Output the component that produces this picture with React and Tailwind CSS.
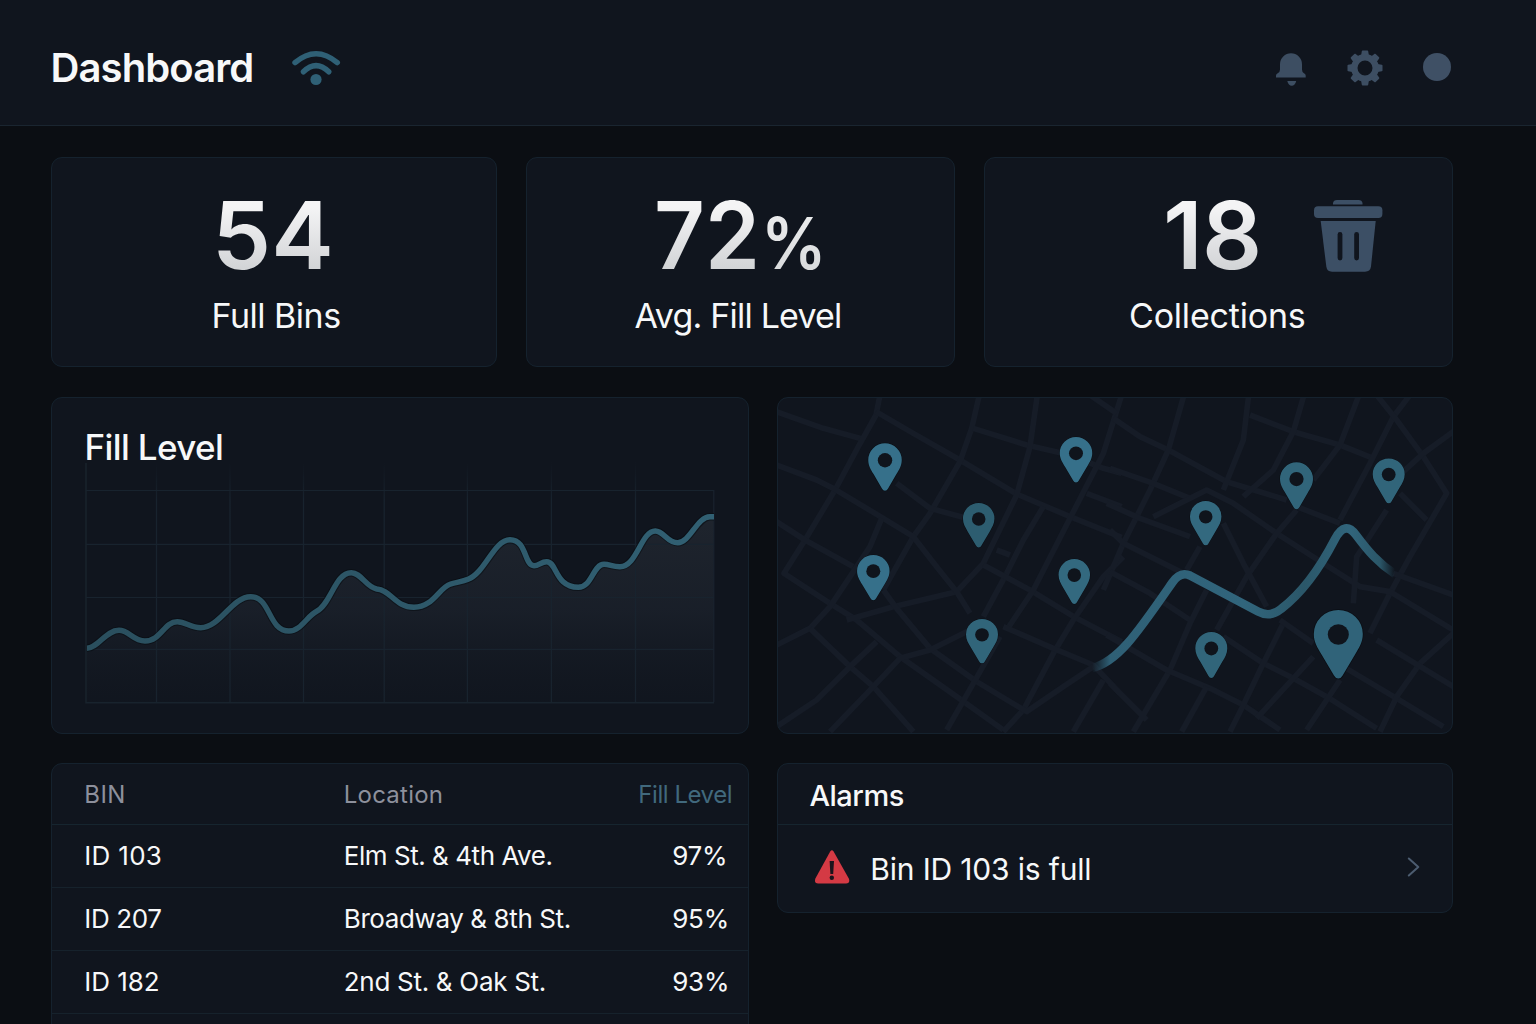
import React from "react";

const CARD =
  "rounded-[11px] border border-[#15222e] bg-[#10151e] overflow-hidden";
const NUMBER =
  "bg-linear-to-b from-[#f4f4f5] from-20% to-[#d3d5d7] to-85% bg-clip-text text-transparent text-[94px] leading-[94px] font-semibold whitespace-nowrap";
const LABEL =
  "mt-[14px] text-[34px] leading-[40px] text-[#f7f8f9] whitespace-nowrap";

function WifiIcon() {
  return (
    <svg width="52" height="40" viewBox="290 48 52 40" fill="none">
      <g stroke="#2f6076" strokeLinecap="round">
        <path d="M295 62.6Q316 44.8 337.3 62.6" strokeWidth="5.4" />
        <path d="M303.4 71.8Q316 59.6 328.8 71.8" strokeWidth="5.4" />
      </g>
      <circle cx="316" cy="79.5" r="5.6" fill="#2f6076" />
    </svg>
  );
}

function BellIcon() {
  return (
    <svg width="32" height="36" viewBox="1275 50 32 36" fill="#3d4e62">
      <path d="M1280 65V64.3A11 11 0 0 1 1302 64.3V69.5Q1302 72.3 1304 73.2Q1305.7 74 1305.7 75.5V77.5H1276V75.5Q1276 74 1277.7 73.2Q1280 72.3 1280 69.5Z" />
      <path d="M1287.3 81H1296.2Q1295 85.8 1291.7 85.8Q1288.5 85.8 1287.3 81Z" />
    </svg>
  );
}

function GearIcon() {
  const angles = [0, 45, 90, 135, 180, 225, 270, 315];
  return (
    <svg width="36" height="36" viewBox="-18 -18 36 36">
      <circle r="10.7" fill="none" stroke="#3d4e62" strokeWidth="6.4" />
      {angles.map((a) => (
        <path
          key={a}
          d="M-3.9 -12.5L-3.2 -16.8Q-3.1 -17.5 -2.4 -17.5H2.4Q3.1 -17.5 3.2 -16.8L3.9 -12.5Z"
          fill="#3d4e62"
          transform={`rotate(${a})`}
        />
      ))}
    </svg>
  );
}

function TrashIcon() {
  return (
    <svg width="70" height="74" viewBox="1313 199 70 74" className="mt-[11px] ml-[50px]">
      <g fill="#3c4f65">
        <path d="M1333 204.500V203Q1333.500 200 1337 200H1358.500Q1362 200 1362.500 203V204.500Z" />
        <rect x="1314" y="206.2" width="68.4" height="11.8" rx="4" />
        <path d="M1320.7 221H1375.7L1371 266.5Q1370.3 271.7 1365 271.7H1332Q1327 271.7 1326.3 266.5Z" />
      </g>
      <g fill="#10151e">
        <rect x="1337.6" y="232" width="4.8" height="28.5" rx="2.4" />
        <rect x="1354.2" y="232" width="4.8" height="28.5" rx="2.4" />
      </g>
    </svg>
  );
}

function WarningIcon() {
  return (
    <svg width="36" height="36" viewBox="814 849 36 36">
      <path
        d="M830.2 851.5Q831.9 849.2 833.6 851.5L848.8 878.5Q850.6 883.2 846 883.5H818.2Q813.8 883.2 815.4 878.5Z"
        fill="#d43a44"
      />
      <path d="M829.6 861H834L833.2 874H830.4Z" fill="#1a141c" />
      <circle cx="831.8" cy="877.8" r="2.2" fill="#1a141c" />
    </svg>
  );
}

const LINE =
  "M87 648.3C98 648 106 630.3 119 630.3C129 630.3 133 641 145 641C161 641 164 621.7 177.3 621.7C186 621.7 190 627.7 200.7 627.7C220 627.7 232 596.7 250.7 596.7C271 596.7 268 631 289 631C301 631 307 616 316.7 611.3C331 604 335 572.7 351.3 572.7C361 572.7 366 587 376.7 589C391 590 395 607.3 414 607.3C433 607.3 439 588 450 584.3C456 582 462 582 468 579.3C485 573 494 539.7 510 539.7C527 539.7 524 565.7 534 565.7C539 565.7 541 561.7 546.7 561.7C557 561.7 555 587.3 578.3 587.3C592 587.3 593 564.3 604 564.3C610 564.3 612 566.7 620 566.7C637 566.7 641 531 655.3 531C664 531 667 542.7 677.7 542.7C690 542.7 697 516.7 710 516.7H714";

function FillChart() {
  const xs = [156.5, 230, 303.5, 384.2, 467.4, 551.4, 635.5];
  const ys = [490.5, 544.4, 597.5, 649.4];
  return (
    <svg width="696" height="271" viewBox="52 462 696 271" className="block">
      <defs>
        <linearGradient id="area" gradientUnits="userSpaceOnUse" x1="0" y1="520" x2="0" y2="703">
          <stop offset="0" stopColor="#20262f" stopOpacity="0.9" />
          <stop offset="0.5" stopColor="#1b212b" stopOpacity="0.8" />
          <stop offset="1" stopColor="#141a23" stopOpacity="0.15" />
        </linearGradient>
        <linearGradient id="rise" gradientUnits="userSpaceOnUse" x1="0" y1="462" x2="0" y2="500">
          <stop offset="0" stopColor="#16202b" stopOpacity="0" />
          <stop offset="1" stopColor="#18232e" />
        </linearGradient>
        <linearGradient id="stroke" gradientUnits="userSpaceOnUse" x1="87" y1="0" x2="714" y2="0">
          <stop offset="0" stopColor="#2a4f5e" />
          <stop offset="1" stopColor="#316073" />
        </linearGradient>
      </defs>
      <path d={`${LINE}V703H87Z`} fill="url(#area)" />
      {xs.map((x) => (
        <rect key={x} x={x - 0.6} y="462" width="1.2" height="241" fill="url(#rise)" />
      ))}
      {ys.map((y) => (
        <path key={y} d={`M86 ${y}H714`} stroke="#18232e" strokeWidth="1.2" />
      ))}
      <path d="M86 463V702.8H714" fill="none" stroke="#18232d" strokeWidth="1.5" />
      <path d="M713.8 490V702" stroke="#1a222d" strokeWidth="1.2" />
      <path d={LINE} fill="none" stroke="#090d13" strokeWidth="7.4" opacity="0.6" />
      <path d={LINE} fill="none" stroke="url(#stroke)" strokeWidth="5.4" />
    </svg>
  );
}

const ROADS_WEST = [
  "20,65 160,115 280,148",
  "330,15 318,75 265,170 195,300 105,450 42,550 180,640 260,690 390,800 560,920 700,1020",
  "318,65 430,130 570,210 740,312 900,380 1055,442",
  "628,15 605,115 570,215 480,370 430,440 340,600",
  "610,115 770,165 900,195 1000,235 1055,250",
  "802,15 780,170 740,315 640,520 560,605 370,650 230,690",
  "20,225 140,270 195,298 340,385 430,440 500,530 560,605 600,670",
  "20,395 105,450 250,530",
  "335,385 300,470 180,650 120,715 20,765",
  "380,280 480,355 590,385",
  "820,350 760,450 710,550 640,680",
  "680,480 720,495",
  "640,525 780,600 920,685 1055,755",
  "1055,15 1000,190 900,385 790,600 710,720",
  "960,15 1040,70",
  "950,310 1055,350",
  "1060,500 1000,560 910,690 850,790 760,960 700,1025",
  "700,710 850,775 970,825 1050,910",
  "970,830 880,890 770,965 620,875 480,775 380,655 340,600",
  "120,715 240,830 310,890 430,1025",
  "320,755 240,830 140,930 20,1010",
  "600,720 480,780 390,805 310,890 180,1025",
  "690,740 610,880 530,1020",
  "1000,870 910,1025",
];

const ROADS_EAST = [
  "10,85 90,140 175,180 350,275 530,330",
  "222,15 175,180 120,300 40,460 -20,600",
  "416,15 400,150 340,300",
  "420,75 550,125 690,165 790,205",
  "582,15 550,125 490,240 400,320",
  "747,15 690,165 610,270",
  "900,15 850,80 780,220 690,390",
  "800,15 860,90 940,200 1010,310 900,500 840,610 780,730",
  "1030,125 940,190 880,245",
  "0,235 130,280 240,325",
  "130,380 290,300 370,340 500,430 640,520 750,590 840,605 1030,720",
  "-10,340 90,385 240,440",
  "560,350 690,400",
  "560,360 500,430 410,560 320,720",
  "340,400 400,520 470,650",
  "270,470 230,540",
  "0,420 40,460 220,550",
  "850,550 1030,615",
  "870,310 950,390",
  "830,360 740,500 730,640",
  "0,545 120,610 240,690",
  "290,600 240,700 180,840 70,1025",
  "-10,735 170,840 300,895 400,945 510,1020",
  "340,740 460,820 550,865 650,920 800,1015",
  "520,700 460,820 400,945 360,1025",
  "510,690 610,760",
  "610,800 550,865 440,985",
  "690,870 590,1020",
  "700,830 860,925 1000,1010",
  "1030,730 930,820 860,920 810,1025",
  "800,750 1030,890",
  "0,880 110,990",
  "290,890 215,1025",
];

// [centre x, top, width, height, fill]
const PINS = [
  [885, 443.3, 33.5, 47.5, "#36708a"],
  [1076, 437, 32.5, 45.5, "#36708a"],
  [978.7, 503, 31.5, 44.5, "#2d5d70"],
  [873.3, 555, 32.5, 45.3, "#36708a"],
  [1074.3, 559, 31.5, 45, "#33697f"],
  [982, 619, 32, 44.3, "#31657a"],
  [1205.7, 501, 31.5, 44.3, "#33697f"],
  [1296.5, 462.3, 33, 47, "#31657a"],
  [1388.7, 458.5, 32, 44.8, "#31657a"],
  [1211.3, 632, 32, 46, "#31657a"],
  [1338.3, 610, 49, 68.5, "#306379"],
];

const ROUTE =
  "M1092 668C1118 662 1138 632 1172 583Q1180 571 1190 575.5L1258 611.5Q1270 618 1281 609C1302 593 1320 568 1335 539Q1345 520 1356 535C1368 551 1378 563 1395 574";

function RouteMap() {
  return (
    <svg width="674" height="335" viewBox="778 398 674 335" className="block">
      <defs>
        <linearGradient id="route" gradientUnits="userSpaceOnUse" x1="1092" y1="0" x2="1395" y2="0">
          <stop offset="0" stopColor="#2f6076" stopOpacity="0" />
          <stop offset="0.06" stopColor="#2f6076" />
          <stop offset="0.5" stopColor="#31657c" />
          <stop offset="0.7" stopColor="#2b5769" />
          <stop offset="0.85" stopColor="#31657c" />
          <stop offset="0.95" stopColor="#2b5769" />
          <stop offset="1" stopColor="#2b5769" stopOpacity="0" />
        </linearGradient>
      </defs>
      <g fill="none" stroke="#161c27" strokeWidth="17" strokeLinejoin="round">
        <g transform="translate(770 390) scale(0.33333)">
          {ROADS_WEST.map((p) => (
            <polyline key={p} points={p} />
          ))}
        </g>
        <g transform="translate(1110 390) scale(0.33333)">
          {ROADS_EAST.map((p) => (
            <polyline key={p} points={p} />
          ))}
        </g>
      </g>
      <path d={ROUTE} fill="none" stroke="url(#route)" strokeWidth="8.5" />
      {PINS.map(([x, y, w, h, fill]) => (
        <g key={x} transform={`translate(${x - w / 2} ${y}) scale(${w / 33} ${h / 47})`}>
          <path
            d="M16.5 47Q14.6 47 13.6 45L5.2 30.5C2.5 26 0 22 0 16.5A16.5 16.5 0 0 1 33 16.5C33 22 30.5 26 27.8 30.5L19.4 45Q18.4 47 16.5 47Z"
            fill={fill}
            stroke="#0a0e14"
            strokeWidth="1"
            paintOrder="stroke"
          />
          <circle cx="16.5" cy="16.8" r="7.1" fill="#0f141c" />
        </g>
      ))}
    </svg>
  );
}

const ROWS = [
  { id: "ID 103", idCls: "tracking-[0.3px]", place: "Elm St. & 4th Ave.", placeCls: "tracking-[-0.46px]", fill: "97%" },
  { id: "ID 207", idCls: "tracking-[-0.35px]", place: "Broadway & 8th St.", placeCls: "tracking-[-0.4px]", fill: "95%" },
  { id: "ID 182", idCls: "tracking-[-0.05px]", place: "2nd St. & Oak St.", placeCls: "tracking-[-0.3px]", fill: "93%" },
];

const GRID = "grid grid-cols-[259.5px_294.5px_1fr] items-center pl-[32.3px] whitespace-nowrap";

export default function App() {
  return (
    <div className="h-[1024px] w-[1536px] overflow-hidden bg-[#0b0e13] font-[Inter,sans-serif] text-[#f7f8f9]">
      <header className="flex h-[126px] items-start border-b border-[#1a2530] bg-[#10151e]">
        <h1 className="mt-[44px] ml-[50.5px] w-[208px] text-[40px] leading-[48px] font-semibold tracking-[-0.9px]">
          Dashboard
        </h1>
        <div className="mt-[48px] ml-[31.5px]">
          <WifiIcon />
        </div>
        <div className="mt-[50px] mr-[85px] ml-auto flex items-start">
          <BellIcon />
          <div className="ml-[40px]">
            <GearIcon />
          </div>
          <div className="mt-[3px] ml-[40px] size-[28px] rounded-full bg-[#3f5065]" />
        </div>
      </header>

      <main className="flex w-[1453px] flex-col pt-[31px] pl-[51px]">
        <section className="grid h-[210px] grid-cols-[446px_429px_469px] gap-[29px]">
          <div className={`${CARD} flex flex-col items-start pt-[30px]`}>
            <div className={`${NUMBER} ml-[160px] tracking-[0.1px]`}>54</div>
            <div className={`${LABEL} ml-[159.5px] tracking-[-0.5px]`}>Full Bins</div>
          </div>
          <div className={`${CARD} flex flex-col items-start pt-[30px]`}>
            <div className="ml-[127px] flex h-[94px] items-baseline">
              <span className={`${NUMBER} origin-left scale-x-[0.94]`}>72</span>
              <span className="ml-[-5.5px] origin-left scale-x-[0.92] bg-linear-to-b from-[#f0f1f2] to-[#d3d5d7] bg-clip-text text-[71px] leading-[90px] font-semibold text-transparent">
                %
              </span>
            </div>
            <div className={`${LABEL} ml-[107.5px] tracking-[-0.8px]`}>Avg. Fill Level</div>
          </div>
          <div className={`${CARD} flex flex-col items-start pt-[30px]`}>
            <div className="ml-[178px] flex h-[94px] items-start">
              <div className={`${NUMBER} tracking-[-0.8px]`}>18</div>
              <div className="ml-[2px]">
                <TrashIcon />
              </div>
            </div>
            <div className={`${LABEL} ml-[144px] tracking-[-0.2px]`}>Collections</div>
          </div>
        </section>

        <section className="mt-[30px] grid h-[337px] grid-cols-[698px_676px] gap-[28px]">
          <div className={`${CARD} pt-[34px]`}>
            <h2 className="ml-[32.5px] text-[35px] leading-[30px] font-medium tracking-[-0.62px]">
              Fill Level
            </h2>
            <FillChart />
          </div>
          <div className={CARD}>
            <RouteMap />
          </div>
        </section>

        <section className="mt-[29px] grid grid-cols-[698px_676px] items-start gap-[28px]">
          <div className={`${CARD} h-[300px]`}>
            <div className={`${GRID} h-[61px] border-b border-[#16252f] pt-[2px] text-[24px] text-[#8d909c]`}>
              <div className="tracking-[0.4px]">BIN</div>
              <div className="tracking-[0.22px]">Location</div>
              <div className="tracking-[-0.45px] text-[#41697d]">Fill Level</div>
            </div>
            {ROWS.map((r) => (
              <div key={r.id} className={`${GRID} h-[63px] border-b border-[#16222c] text-[26px] leading-[38px]`}>
                <div className={r.idCls}>{r.id}</div>
                <div className={r.placeCls}>{r.place}</div>
                <div className="ml-[34px] tracking-[-0.3px]">{r.fill}</div>
              </div>
            ))}
          </div>
          <div className={`${CARD} h-[150px]`}>
            <div className="flex h-[61px] items-center border-b border-[#16252f] pt-[4px] pl-[31.5px] text-[29px] leading-[36px] font-medium tracking-[-0.5px]">
              Alarms
            </div>
            <div className="flex h-[87px] items-center pl-[36px]">
              <div className="-mt-[3px]">
                <WarningIcon />
              </div>
              <div className="ml-[20.3px] text-[30px] leading-[36px] tracking-[-0.17px]">
                Bin ID 103 is full
              </div>
              <svg width="16" height="22" viewBox="0 0 16 22" className="-mt-[4px] mr-[30px] ml-auto" fill="none">
                <path d="M2.8 2.5L12.3 11L2.8 19.5" stroke="#4c5c70" strokeWidth="2" strokeLinecap="round" strokeLinejoin="round" />
              </svg>
            </div>
          </div>
        </section>
      </main>
    </div>
  );
}
